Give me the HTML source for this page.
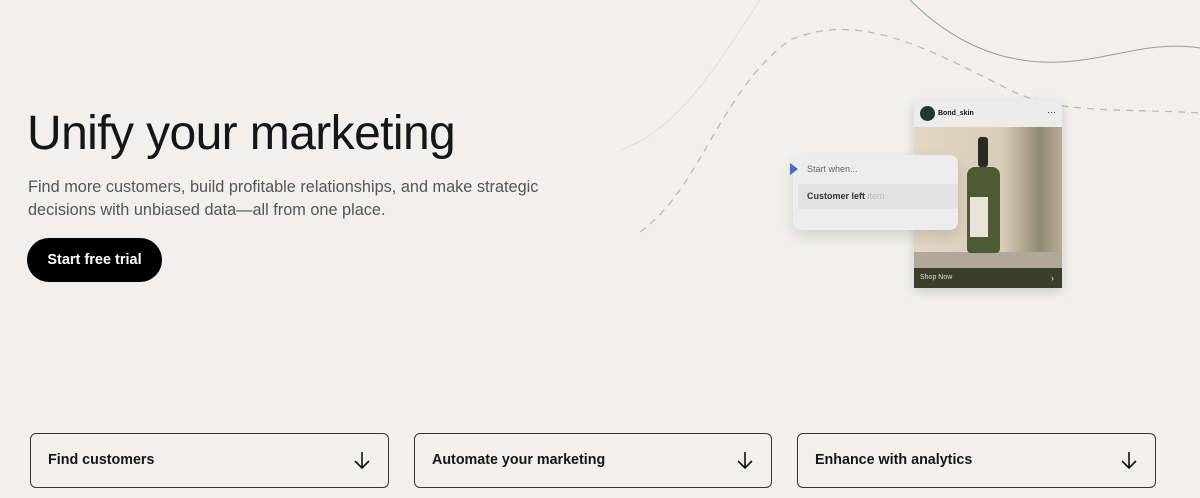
<!DOCTYPE html>
<html><head><style>
body{margin:0;width:1200px;height:498px;background:#f1f0ee;font-family:"Liberation Sans",sans-serif;position:relative;overflow:hidden;color:#111}
h1{position:absolute;left:27px;top:106px;margin:0;font-weight:400;font-size:48px;letter-spacing:-0.6px;color:#161616}
.sub{position:absolute;left:28px;top:176px;font-size:16.3px;line-height:23px;color:#555;width:540px}
.btn{position:absolute;left:27px;top:238px;width:135px;height:44px;border-radius:22px;background:#000;color:#fff;font-weight:700;font-size:14.5px;line-height:44px;text-align:center}
.tab{position:absolute;top:433px;width:359px;height:55px;border:1px solid #333;border-radius:6px;box-sizing:border-box;font-size:14.3px;font-weight:700;line-height:53px;padding-left:17px;color:#161616}
.tab svg{position:absolute;right:18px;top:17px}
.card{position:absolute;left:914px;top:100px;width:148px;height:188px;box-shadow:0 4px 10px rgba(0,0,0,.15);background:#ececec}
.pop{position:absolute;left:793px;top:155px;width:165px;height:75px;background:#ededed;border-radius:8px;box-shadow:0 6px 14px rgba(0,0,0,.12)}
</style></head><body>
<svg style="position:absolute;left:0;top:0" width="1200" height="498">
<path d="M910 0 C950 40 1000 65 1060 62 C1110 60 1150 40 1200 48" fill="none" stroke="#9a9a9a" stroke-width="1"/>
<path d="M640 232 C700 190 720 90 790 40 C860 10 930 50 1010 90 C1060 115 1120 108 1200 113" fill="none" stroke="#bbb" stroke-width="1.3" stroke-dasharray="7 6"/>
<path d="M760 0 C720 60 680 130 620 150" fill="none" stroke="#ddd" stroke-width="1"/>
</svg>
<h1>Unify your marketing</h1>
<div class="sub">Find more customers, build profitable relationships, and make strategic decisions with unbiased data—all from one place.</div>
<div class="btn">Start free trial</div>
<div class="card">
 <div style="height:27px;background:#ececec;position:relative">
  <div style="position:absolute;left:6px;top:6px;width:15px;height:15px;border-radius:50%;background:#1f3a2c"></div>
  <div style="position:absolute;left:24px;top:10px;font-size:7px;font-weight:700">Bond_skin</div>
  <div style="position:absolute;right:6px;top:7px;font-size:9px">···</div>
 </div>
 <div style="height:141px;background:linear-gradient(90deg,#e2d7c6 0%,#d9ccb8 60%,#8f8a73 85%,#b8ad97 100%);position:relative">
  <div style="position:absolute;left:0;right:0;bottom:0;height:16px;background:#b0a999"></div>
  <div style="position:absolute;left:64px;top:10px;width:10px;height:30px;background:#2a2a24;border-radius:3px"></div>
  <div style="position:absolute;left:53px;top:40px;width:33px;height:86px;background:#4c5a35;border-radius:8px 8px 4px 4px"></div>
  <div style="position:absolute;left:56px;top:70px;width:18px;height:40px;background:#e9e4da"></div>
 </div>
 <div style="height:20px;background:#3b3e2a;color:#ddd;font-size:7px;line-height:20px;padding-left:6px;position:relative">Shop Now<span style="position:absolute;right:8px;font-size:9px">›</span></div>
</div>
<div class="pop">
 <div style="position:absolute;left:-3px;top:8px;width:0;height:0;border-left:8px solid #3a6fd0;border-top:6px solid transparent;border-bottom:6px solid transparent"></div>
 <div style="position:absolute;left:14px;top:9px;font-size:9px;color:#666">Start when...</div>
 <div style="position:absolute;left:5px;top:29px;width:160px;height:25px;background:#e2e2e2"></div>
 <div style="position:absolute;left:14px;top:36px;font-size:9px;font-weight:700;color:#333">Customer left <span style="font-weight:400;color:#bbb">item</span></div>
</div>
<div class="tab" style="left:30px">Find customers<svg width="16" height="18" viewBox="0 0 16 18"><path d="M8 1V17M1 10L8 17L15 10" fill="none" stroke="#111" stroke-width="1.6"/></svg></div>
<div class="tab" style="left:414px;width:358px">Automate your marketing<svg width="16" height="18" viewBox="0 0 16 18"><path d="M8 1V17M1 10L8 17L15 10" fill="none" stroke="#111" stroke-width="1.6"/></svg></div>
<div class="tab" style="left:797px">Enhance with analytics<svg width="16" height="18" viewBox="0 0 16 18"><path d="M8 1V17M1 10L8 17L15 10" fill="none" stroke="#111" stroke-width="1.6"/></svg></div>
</body></html>
